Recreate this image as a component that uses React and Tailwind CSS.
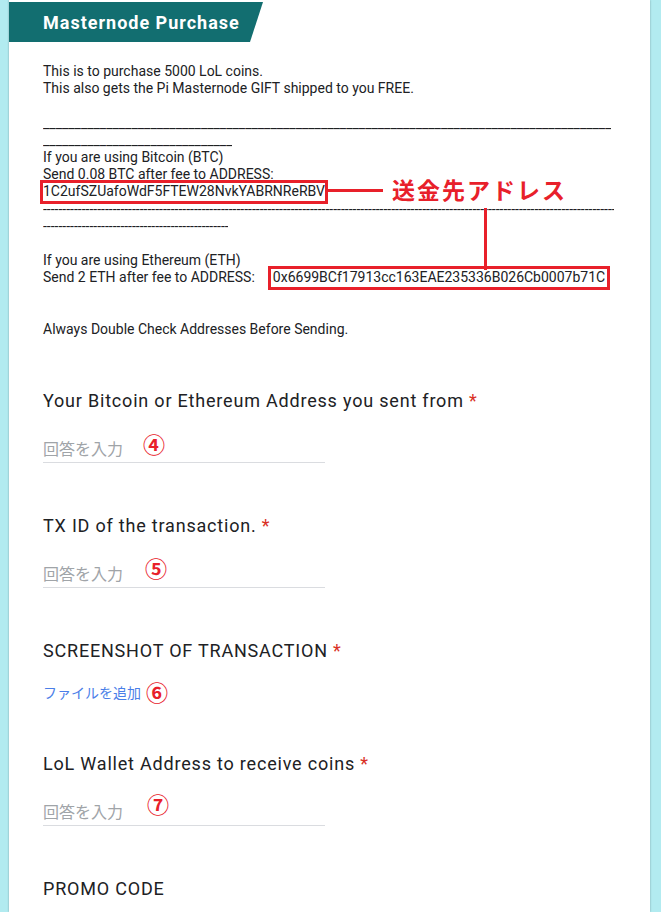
const RED = 'text-[#e8202a]';

function Circled({ children, className = '' }) {
    return (
        <span className={`absolute font-bold text-[22px] leading-[22px] ${RED} ${className}`}>
            {children}
        </span>
    );
}

function Question({ title, required = true, top = 'pt-[51px]', children }) {
    return (
        <div className={top}>
            <div className="text-[18px] leading-[24px] tracking-[0.8px] text-[#202124]">
                {title}
                {required && <span className="text-[#d93025]"> *</span>}
            </div>
            {children}
        </div>
    );
}

function AnswerInput({ mark, markClass }) {
    return (
        <div className="relative mt-[25px] w-[282px] border-b border-[#dadce0] text-[16px] leading-[24px] text-[#a0a4a8]">
            回答を入力
            <Circled className={markClass}>{mark}</Circled>
        </div>
    );
}

export default function App() {
    return (
        <div className="h-[912px] overflow-hidden bg-[#b2ebf0] font-['Roboto','Noto_Sans_CJK_JP',sans-serif]">
            <div className="relative ml-[9px] w-[641px] min-h-[912px] bg-white shadow-[0_0_2px_rgba(0,0,0,0.3)]">
                {/* Header banner */}
                <div className="pt-[2px]">
                    <div className="flex h-[40px] w-[254px] items-center bg-[#126e70] pl-[34px] [clip-path:polygon(0_0,254px_0,241px_40px,0_40px)]">
                        <h1 className="text-[18px] font-bold tracking-[1px] text-white">Masternode Purchase</h1>
                    </div>
                </div>

                {/* Description */}
                <div className="px-[34px] pt-[21px] text-[14px] leading-[17.2px] text-[#202124]">
                    <p>This is to purchase 5000 LoL coins.</p>
                    <p>This also gets the Pi Masternode GIFT shipped to you FREE.</p>
                    <p>&nbsp;</p>
                    <div className="w-[568px] overflow-hidden whitespace-nowrap">{'_'.repeat(110)}</div>
                    <div className="w-[189px] overflow-hidden whitespace-nowrap">{'_'.repeat(36)}</div>
                    <p>If you are using Bitcoin (BTC)</p>
                    <p>Send 0.08 BTC after fee to ADDRESS:</p>
                    <p>
                        <span className="inline-block outline-3 outline-[#e8202a]">
                            1C2ufSZUafoWdF5FTEW28NvkYABRNReRBV
                        </span>
                    </p>
                    <div className="w-[571px] overflow-hidden whitespace-nowrap">{'-'.repeat(170)}</div>
                    <div className="w-[185px] overflow-hidden whitespace-nowrap">{'-'.repeat(56)}</div>
                    <p>&nbsp;</p>
                    <p>If you are using Ethereum (ETH)</p>
                    <p>
                        Send 2 ETH after fee to ADDRESS:
                        <span className="ml-[16px] inline-block px-[2px] outline-3 outline-[#e8202a]">
                            0x6699BCf17913cc163EAE235336B026Cb0007b71C
                        </span>
                    </p>
                    <p>&nbsp;</p>
                    <p>&nbsp;</p>
                    <p>Always Double Check Addresses Before Sending.</p>
                </div>

                {/* Questions */}
                <div className="px-[34px]">
                    <Question title="Your Bitcoin or Ethereum Address you sent from">
                        <AnswerInput mark="④" markClass="left-[100px] -top-[3px]" />
                    </Question>
                    <Question title="TX ID of the transaction.">
                        <AnswerInput mark="⑤" markClass="left-[102px] -top-[4px]" />
                    </Question>
                    <Question title="SCREENSHOT OF TRANSACTION">
                        <div className="mt-[18px] flex h-[24px] items-center text-[14px] leading-[24px] text-[#4a7ee8]">
                            ファイルを追加
                            <span className={`relative top-[1px] ml-[5px] font-bold text-[22px] leading-[22px] ${RED}`}>
                                ⑥
                            </span>
                        </div>
                    </Question>
                    <Question title="LoL Wallet Address to receive coins" top="pt-[47px]">
                        <AnswerInput mark="⑦" markClass="left-[104px] -top-[6px]" />
                    </Question>
                    <Question title="PROMO CODE" required={false} />
                </div>

                {/* Annotation overlay */}
                <div className="absolute left-[318px] top-[189px] h-[3px] w-[56px] bg-[#e8202a]" />
                <div className="absolute left-[475px] top-[208px] h-[62px] w-[3px] bg-[#e8202a]" />
                <div className={`absolute left-[383px] top-[180px] text-[23px] font-bold leading-[24px] tracking-[2px] ${RED}`}>
                    送金先アドレス
                </div>
            </div>
        </div>
    );
}
